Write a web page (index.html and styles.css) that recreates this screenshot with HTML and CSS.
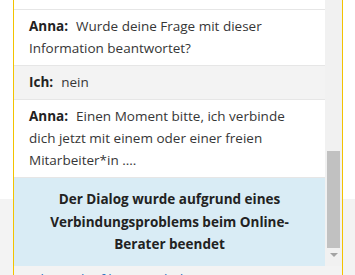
FILE: index.html
```html
<!DOCTYPE html>
<html lang="de">
<head>
<meta charset="utf-8">
<link rel="stylesheet" href="styles.css">
</head>
<body>
<div class="panel">
  <div class="scroll-area">
    <div class="messages">
      <div class="msg msg-cut"></div>
      <div class="msg"><span class="who">Anna:</span>Wurde deine Frage mit dieser Information beantwortet?</div>
      <div class="msg msg-own"><span class="who">Ich:</span>nein</div>
      <div class="msg"><span class="who">Anna:</span>Einen Moment bitte, ich verbinde dich jetzt mit einem oder einer freien Mitarbeiter*in ....</div>
      <div class="notice">Der Dialog wurde aufgrund eines Verbindungsproblems beim Online-Berater beendet</div>
    </div>
    <div class="scrollbar">
      <div class="thumb"></div>
      <div class="arrow"></div>
    </div>
  </div>
  <div class="footer"><a class="link" href="#">Chatverlauf herunterladen</a></div>
</div>
</body>
</html>
```
FILE: styles.css
```css
html, body {
  margin: 0;
  padding: 0;
}
body {
  width: 355px;
  height: 275px;
  overflow: hidden;
  background: linear-gradient(#ffffff 0, #ffffff 199px, #f3f3f3 199px);
  font-family: "Open Sans", "Noto Sans", sans-serif;
  font-size: 13.5px;
  color: #363636;
}
.panel {
  margin-left: 13px;
  width: 328px;
  border-left: 1px solid #f2c300;
  border-right: 1px solid #f2c300;
  background: #f3f3f3;
  height: 275px;
  display: flex;
  flex-direction: column;
}
.scroll-area {
  display: flex;
  height: 266px;
  flex: none;
}
.messages {
  flex: 1;
  display: flex;
  flex-direction: column;
  background: #ffffff;
}
.msg {
  padding: 5px 16px 6px 15px;
  line-height: 22px;
  border-bottom: 1px solid #e6e6e6;
  background: #ffffff;
}
.msg-cut {
  height: 10px;
  padding: 0;
  box-sizing: border-box;
}
.msg-own {
  background: #f3f3f3;
}
.who {
  font-weight: 700;
  color: #222222;
  margin-right: 8px;
}
.notice {
  flex: 1;
  background: #d9ecf5;
  padding: 10px 28px 0;
  text-align: center;
  font-weight: 700;
  line-height: 22.5px;
  color: #222222;
}
.scrollbar {
  width: 17px;
  background: #f1f1f1;
  display: flex;
  flex-direction: column;
  align-items: center;
}
.thumb {
  margin-top: 151px;
  width: 13px;
  height: 97px;
  background: #c1c1c1;
}
.arrow {
  margin-top: 5px;
  width: 0;
  height: 0;
  border-left: 4px solid transparent;
  border-right: 4px solid transparent;
  border-top: 4px solid #a3a3a3;
}
.footer {
  flex: 1;
  background: #f3f3f3;
  padding: 4px 0 0 18px;
  line-height: 18px;
}
.link {
  color: #1f6fbf;
  text-decoration: none;
}
```
